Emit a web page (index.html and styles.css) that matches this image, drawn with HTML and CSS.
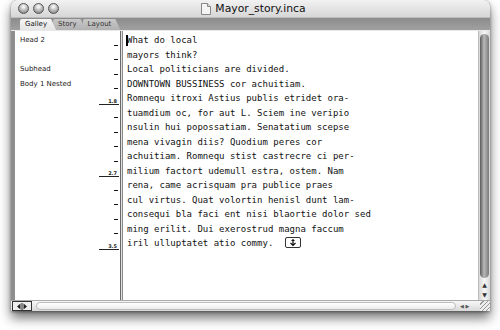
FILE: index.html
```html
<!DOCTYPE html>
<html lang="en">

<head>
  <meta charset="UTF-8">
  <title>Mayor_story.inca</title>
  <link rel="stylesheet" href="styles.css">
</head>

<body>
  <div class="window">
    <div class="titlebar">
      <div class="lights">
        <span class="light"></span>
        <span class="light"></span>
        <span class="light"></span>
      </div>
      <div class="title">
        <svg class="docicon" width="10" height="12" viewBox="0 0 10 12">
          <path d="M0.5 0.5 H6.5 L9.5 3.5 V11.5 H0.5 Z" fill="#f4f4f4" stroke="#888" />
          <path d="M6.5 0.5 V3.5 H9.5" fill="#ddd" stroke="#888" />
        </svg>
        Mayor_story.inca
      </div>
    </div>

    <div class="tabbar">
      <span class="tab active">Galley</span>
      <span class="tab">Story</span>
      <span class="tab">Layout</span>
    </div>

    <div class="content">
      <div class="sidebar">
        <div class="row"><span class="label">Head 2</span><span class="tick"></span></div>
        <div class="row"><span class="label"></span><span class="tick"></span></div>
        <div class="row"><span class="label">Subhead</span><span class="tick"></span></div>
        <div class="row"><span class="label">Body 1 Nested</span><span class="tick"></span></div>
        <div class="row"><span class="label"></span><span class="depth">1.8</span></div>
        <div class="row"><span class="label"></span><span class="tick"></span></div>
        <div class="row"><span class="label"></span><span class="tick"></span></div>
        <div class="row"><span class="label"></span><span class="tick"></span></div>
        <div class="row"><span class="label"></span><span class="tick"></span></div>
        <div class="row"><span class="label"></span><span class="depth">2.7</span></div>
        <div class="row"><span class="label"></span><span class="tick"></span></div>
        <div class="row"><span class="label"></span><span class="tick"></span></div>
        <div class="row"><span class="label"></span><span class="tick"></span></div>
        <div class="row"><span class="label"></span><span class="tick"></span></div>
        <div class="row"><span class="label"></span><span class="depth">3.5</span></div>
      </div>

      <div class="ruler"></div>

      <div class="text">
        <div class="line"><span class="caret"></span>What do local</div>
        <div class="line">mayors think?</div>
        <div class="line">Local politicians are divided.</div>
        <div class="line">DOWNTOWN BUSSINESS cor achuitiam.</div>
        <div class="line">Romnequ itroxi Astius publis etridet ora-</div>
        <div class="line">tuamdium oc, for aut L. Sciem ine veripio</div>
        <div class="line">nsulin hui popossatiam. Senatatium scepse</div>
        <div class="line">mena vivagin diis? Quodium peres cor</div>
        <div class="line">achuitiam. Romnequ stist castrecre ci per-</div>
        <div class="line">milium factort udemull estra, ostem. Nam</div>
        <div class="line">rena, came acrisquam pra publice praes</div>
        <div class="line">cul virtus. Quat volortin henisl dunt lam-</div>
        <div class="line">consequi bla faci ent nisi blaortie dolor sed</div>
        <div class="line">ming erilit. Dui exerostrud magna faccum</div>
        <div class="line">iril ulluptatet atio commy.<span class="anchor"><svg width="12" height="9" viewBox="0 0 12 9"><path d="M6 1 V7.5 M3.5 5 L6 7.5 L8.5 5 M4.5 2.5 H7.5" fill="none" stroke="#111" stroke-width="1.2" /></svg></span></div>
      </div>

      <div class="vscroll">
        <div class="thumb"></div>
        <div class="arrows">
          <span class="arrow">&#9650;</span>
          <span class="arrow">&#9660;</span>
        </div>
      </div>
    </div>

    <div class="bottombar">
      <span class="split">
        <svg width="12" height="7" viewBox="0 0 12 7">
          <path d="M1 3.5 L4.5 0.5 V6.5 Z M11 3.5 L7.5 0.5 V6.5 Z" fill="#222" />
          <path d="M6 0 V7" stroke="#222" stroke-width="1" />
        </svg>
      </span>
      <span class="hscroll"></span>
      <span class="harrows">&#9664; &#9654;</span>
      <span class="grip"></span>
    </div>
  </div>
</body>

</html>
```

FILE: styles.css
```css
html,
body {
  margin: 0;
  min-height: 330px;
  background: #fff;
  font-family: "DejaVu Sans", "Liberation Sans", sans-serif;
}

.window {
  margin-left: 11px;
  width: 479px;
  height: 311px;
  display: flex;
  flex-direction: column;
  border-radius: 6px 6px 0 0;
  background: #9a9a9a;
  box-shadow: 0 7px 12px rgba(0, 0, 0, 0.55), 0 1px 3px rgba(0, 0, 0, 0.4);
}

.titlebar {
  height: 17px;
  display: flex;
  align-items: center;
  border-radius: 6px 6px 0 0;
  background: linear-gradient(#f2f2f2, #d6d6d6);
  border-bottom: 1px solid #bdbdbd;
}

.lights {
  display: flex;
  gap: 4px;
  padding-left: 7px;
}

.light {
  width: 9px;
  height: 9px;
  border-radius: 50%;
  border: 1px solid #555;
  background: radial-gradient(circle at 50% 30%, #f4f4f4 10%, #9c9c9c 70%, #6c6c6c);
}

.title {
  flex: 1;
  display: flex;
  align-items: center;
  justify-content: center;
  gap: 4px;
  padding-right: 42px;
  font-size: 10.8px;
  color: #111;
}

.tabbar {
  height: 12px;
  display: flex;
  align-items: flex-end;
  padding-left: 9px;
  background: linear-gradient(#8c8c8c, #a0a0a0);
  border-bottom: 1px solid #e8e8e8;
}

.tab {
  height: 11px;
  padding: 0 9px 0 5px;
  margin-right: -3px;
  font-size: 7px;
  line-height: 11px;
  color: #333;
  background: linear-gradient(#c8c8c8, #b2b2b2);
  clip-path: polygon(0 0, calc(100% - 5px) 0, 100% 100%, 0 100%);
  border-radius: 2px 0 0 0;
}

.tab.active {
  background: linear-gradient(#f6f6f6, #e4e4e4);
  color: #111;
  z-index: 1;
}

.content {
  flex: 1;
  display: flex;
  background: #fff;
  border-left: 4px solid #8e8e8e;
}

.sidebar {
  width: 104px;
  padding-top: 2px;
}

.row {
  height: 14.5px;
  display: flex;
  align-items: flex-end;
  justify-content: space-between;
}

.label {
  align-self: center;
  padding-left: 5px;
  font-size: 7px;
  color: #222;
}

.tick {
  width: 4px;
  height: 1px;
  margin-bottom: 2px;
  margin-right: 1px;
  background: #111;
}

.depth {
  width: 18px;
  margin-bottom: 1px;
  padding-right: 2px;
  border-bottom: 1px solid #222;
  font-size: 5px;
  font-weight: bold;
  line-height: 6px;
  text-align: right;
  color: #222;
}

.ruler {
  width: 1px;
  margin: 0 1px;
  background: #e0e0e0;
  border-left: 1px solid #6a6a6a;
  border-right: 1px solid #8a8a8a;
}

.text {
  flex: 1;
  padding: 2px 0 0 3px;
  font-family: "DejaVu Sans Mono", "Liberation Mono", monospace;
  font-size: 9px;
  color: #111;
}

.line {
  height: 14.5px;
  line-height: 14.5px;
  white-space: pre;
  position: relative;
}

.caret {
  position: absolute;
  left: -1px;
  top: 2px;
  width: 2px;
  height: 11px;
  background: #000;
}

.anchor {
  display: inline-flex;
  align-items: center;
  justify-content: center;
  width: 14px;
  height: 9px;
  margin-left: 12px;
  vertical-align: -1px;
  border: 1px solid #333;
  border-radius: 2px;
}

.vscroll {
  width: 11px;
  display: flex;
  flex-direction: column;
  background: linear-gradient(90deg, #d8d8d8, #f6f6f6, #d8d8d8);
  border-left: 1px solid #bbb;
}

.thumb {
  flex: 1;
  margin: 3px 1px 2px;
  border-radius: 5px;
  background: linear-gradient(90deg, #5a5a5a, #b8b8b8 45%, #7a7a7a);
}

.arrows {
  display: flex;
  flex-direction: column;
  align-items: center;
  font-size: 6px;
  line-height: 10px;
  color: #333;
}

.bottombar {
  height: 10px;
  display: flex;
  align-items: stretch;
  background: linear-gradient(#f8f8f8, #d8d8d8);
  border-top: 1px solid #aaa;
}

.split {
  width: 18px;
  margin-left: 1px;
  display: flex;
  align-items: center;
  justify-content: center;
  border: 1px solid #333;
  background: #eee;
}

.hscroll {
  flex: 1;
  margin: 1px 4px 1px 4px;
  border-radius: 5px;
  border: 1px solid #bbb;
  background: linear-gradient(#fff, #ececec);
}

.harrows {
  width: 20px;
  font-size: 5px;
  line-height: 10px;
  color: #555;
}

.grip {
  width: 10px;
  background: repeating-linear-gradient(135deg, #eee 0 2px, #999 2px 3px);
}
```
